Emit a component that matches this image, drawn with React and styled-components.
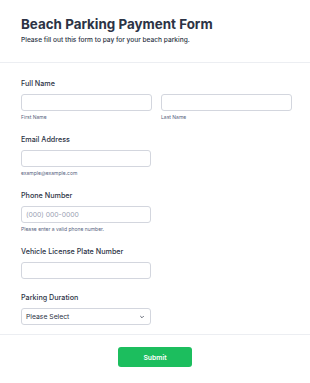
import React from "react";
import styled, { createGlobalStyle } from "styled-components";

const Global = createGlobalStyle`
  html, body { margin: 0; padding: 0; background: #fff; }
  body { font-family: Inter, "Noto Sans", sans-serif; color: #2c3345; }
  * { box-sizing: border-box; }
`;

const Page = styled.div`
  width: 310px;
  display: flex;
  flex-direction: column;
`;

const Header = styled.header`
  padding: 16px 21px 0;
  height: 63px;
  border-bottom: 1px solid #eceef2;
`;

const Title = styled.h1`
  margin: 0;
  font-size: 13.4px;
  line-height: 17px;
  font-weight: 700;
  color: #2c3345;
`;

const Subtitle = styled.p`
  margin: 3px 0 0;
  font-size: 6.6px;
  line-height: 9px;
  font-weight: 500;
  color: #2c3345;
`;

const Body = styled.div`
  padding: 16px 21px 9px;
  display: flex;
  flex-direction: column;
  gap: 14px;
  border-bottom: 1px solid #eceef2;
`;

const Field = styled.div`
  display: flex;
  flex-direction: column;
`;

const Label = styled.label`
  font-size: 7.2px;
  line-height: 10px;
  font-weight: 500;
  color: #2c3345;
  margin-bottom: 5px;
`;

const Row = styled.div`
  display: grid;
  grid-template-columns: 131px 131px;
  column-gap: 9px;
`;

const Col = styled.div`
  display: flex;
  flex-direction: column;
`;

const Input = styled.div`
  width: ${(p) => p.$w || "130px"};
  height: 17px;
  border: 1px solid #d3d6de;
  border-radius: 3px;
  background: #fff;
  display: flex;
  align-items: center;
  padding: 0 4px;
  font-size: 6.8px;
  color: ${(p) => (p.$placeholder ? "#9aa1b3" : "#2c3345")};
  justify-content: space-between;
`;

const Sub = styled.span`
  font-size: 5px;
  line-height: 7px;
  color: #57647e;
  margin-top: 3px;
`;

const Chevron = styled.svg`
  width: 6px;
  height: 6px;
  margin-right: 1px;
`;

const Footer = styled.div`
  display: flex;
  justify-content: center;
  padding: 12px 0 16px;
`;

const Button = styled.button`
  width: 74px;
  height: 20px;
  border: none;
  border-radius: 3px;
  background: #1cbe5e;
  color: #fff;
  font-family: Inter, sans-serif;
  font-size: 6.8px;
  font-weight: 600;
`;

export default function App() {
  return (
    <Page>
      <Global />
      <Header>
        <Title>Beach Parking Payment Form</Title>
        <Subtitle>Please fill out this form to pay for your beach parking.</Subtitle>
      </Header>
      <Body>
        <Field>
          <Label>Full Name</Label>
          <Row>
            <Col>
              <Input $w="131px" />
              <Sub>First Name</Sub>
            </Col>
            <Col>
              <Input $w="131px" />
              <Sub>Last Name</Sub>
            </Col>
          </Row>
        </Field>
        <Field>
          <Label>Email Address</Label>
          <Input />
          <Sub>example@example.com</Sub>
        </Field>
        <Field>
          <Label>Phone Number</Label>
          <Input $placeholder>(000) 000-0000</Input>
          <Sub>Please enter a valid phone number.</Sub>
        </Field>
        <Field>
          <Label>Vehicle License Plate Number</Label>
          <Input />
        </Field>
        <Field>
          <Label>Parking Duration</Label>
          <Input>
            <span>Please Select</span>
            <Chevron viewBox="0 0 10 10">
              <path d="M2.5 3.8 L5 6.3 L7.5 3.8" fill="none" stroke="#2c3345" strokeWidth="1.2" strokeLinecap="round" strokeLinejoin="round" />
            </Chevron>
          </Input>
        </Field>
      </Body>
      <Footer>
        <Button>Submit</Button>
      </Footer>
    </Page>
  );
}
